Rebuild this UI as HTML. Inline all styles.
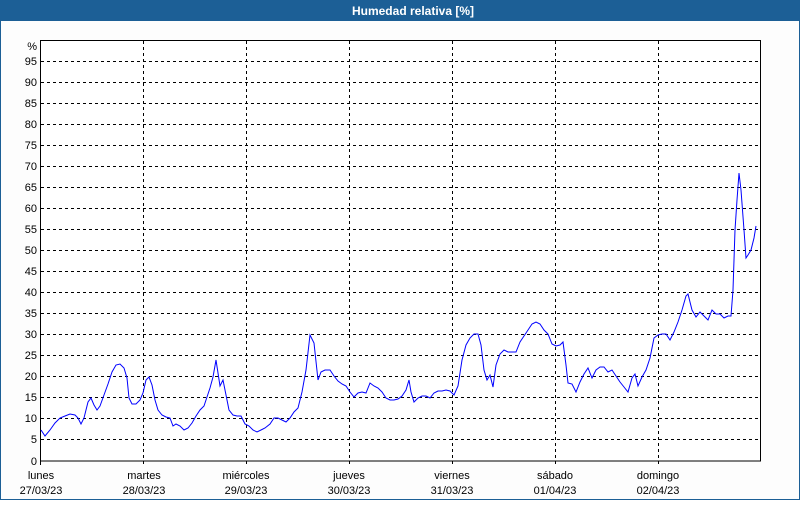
<!DOCTYPE html>
<html><head><meta charset="utf-8"><style>
body{margin:0;width:800px;height:500px;overflow:hidden;background:#fff;font-family:"Liberation Sans",sans-serif}
</style></head><body>
<svg width="800" height="500" xmlns="http://www.w3.org/2000/svg" font-family="Liberation Sans, sans-serif">
<rect x="0" y="0" width="800" height="500" fill="#fdfdfd"/>
<rect x="0.5" y="0.5" width="799" height="499" fill="none" stroke="#1c5f96" stroke-width="1"/>
<rect x="0" y="0" width="800" height="21" fill="#1c5f96"/>
<text x="413" y="15" text-anchor="middle" fill="#fff" font-size="12" font-weight="bold">Humedad relativa [%]</text>
<rect x="40.5" y="40.5" width="720" height="420.5" fill="#fff" stroke="#000"/>
<g stroke="#000" stroke-dasharray="3,3" stroke-width="1">
<path d="M41 439.5H760M41 418.5H760M41 397.5H760M41 376.5H760M41 355.5H760M41 334.5H760M41 313.5H760M41 292.5H760M41 271.5H760M41 250.5H760M41 229.5H760M41 208.5H760M41 187.5H760M41 166.5H760M41 145.5H760M41 124.5H760M41 103.5H760M41 82.5H760M41 61.5H760"/>
<path d="M143.5 41V465M246.5 41V465M349.5 41V465M452.5 41V465M555.5 41V465M658.5 41V465"/>
</g>
<path d="M40.5 461V465" stroke="#000"/>
<g font-size="11" fill="#000" text-anchor="end">
<text x="37" y="50">%</text>
<text x="37" y="65">95</text><text x="37" y="86">90</text><text x="37" y="107">85</text><text x="37" y="128">80</text><text x="37" y="149">75</text><text x="37" y="170">70</text><text x="37" y="191">65</text><text x="37" y="212">60</text><text x="37" y="233">55</text><text x="37" y="254">50</text><text x="37" y="275">45</text><text x="37" y="296">40</text><text x="37" y="317">35</text><text x="37" y="338">30</text><text x="37" y="359">25</text><text x="37" y="380">20</text><text x="37" y="401">15</text><text x="37" y="422">10</text><text x="37" y="443">5</text><text x="37" y="465">0</text>
</g>
<g font-size="11" fill="#000" text-anchor="middle">
<text x="41" y="479">lunes</text><text x="41" y="494">27/03/23</text>
<text x="144" y="479">martes</text><text x="144" y="494">28/03/23</text>
<text x="246" y="479">miércoles</text><text x="246" y="494">29/03/23</text>
<text x="349" y="479">jueves</text><text x="349" y="494">30/03/23</text>
<text x="452" y="479">viernes</text><text x="452" y="494">31/03/23</text>
<text x="555" y="479">sábado</text><text x="555" y="494">01/04/23</text>
<text x="658" y="479">domingo</text><text x="658" y="494">02/04/23</text>
</g>
<polyline fill="none" stroke="#0000ff" stroke-width="1" points="41,430 45,436 50,430 55,423 60,418 65,416 70,414 75,415 78,418 81,424 84,418 88,402 91,398 94,405 97,410 100,406 104,395 108,384 112,372 116,365 120,364 124,368 127,378 129,398 132,404 136,404 140,400 143,393 146,380 149,377 152,385 155,400 158,410 162,415 166,417 170,418 173,426 176,424 180,426 184,430 188,428 192,423 196,416 200,410 204,406 207,397 210,388 213,377 216,360 218,373 220,386 223,380 226,395 229,410 233,415 237,416 241,416 245,424 249,426 253,430 257,432 261,430 265,428 270,424 274,418 278,418 282,420 286,422 290,418 294,412 298,408 302,392 306,370 310,335 314,343 318,380 321,372 325,370 330,370 334,376 338,381 342,384 346,386 350,392 354,397 358,393 362,392 366,393 370,383 374,386 378,388 382,392 386,398 390,400 394,400 398,399 402,396 406,390 409,380 411,392 414,402 418,398 422,396 426,396 430,398 434,393 438,391 442,391 446,390 450,391 454,395 458,386 462,360 466,345 470,338 474,334 478,334 481,345 484,370 487,380 490,375 493,387 496,365 500,354 504,350 508,352 512,352 516,352 520,342 524,336 528,330 532,324 536,322 540,324 544,330 548,334 552,344 556,346 560,345 563,342 566,365 568,383 572,384 576,392 580,382 584,374 588,368 592,378 596,370 600,367 604,367 608,372 612,370 616,376 620,382 624,387 628,392 632,378 635,374 638,386 642,377 646,370 650,358 654,338 658,335 662,334 666,334 670,340 674,332 678,322 682,310 686,296 688,294 692,310 696,317 700,312 704,316 708,320 712,310 716,314 720,314 724,318 728,316 731,316 733,290 735,230 737,200 739,173 741,190 744,230 746,258 748,255 751,250 754,238 756,226"/>
</svg>
</body></html>
